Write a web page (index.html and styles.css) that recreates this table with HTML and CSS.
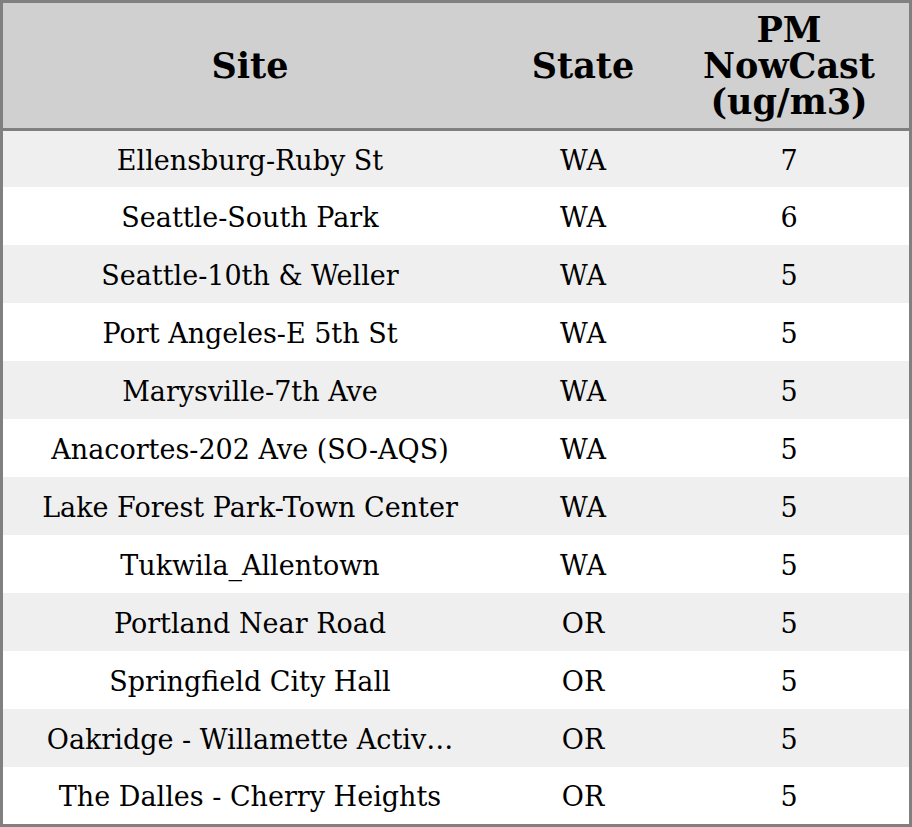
FILE: index.html
```html
<!DOCTYPE html>
<html>
<head>
<meta charset="utf-8">
<link rel="stylesheet" href="styles.css">
</head>
<body>
<table class="tbl">
  <thead>
    <tr>
      <th class="c-site">Site</th>
      <th class="c-state">State</th>
      <th class="c-pm">PM<br>NowCast<br>(ug/m3)</th>
    </tr>
  </thead>
  <tbody>
    <tr><td>Ellensburg-Ruby St</td><td>WA</td><td>7</td></tr>
    <tr><td>Seattle-South Park</td><td>WA</td><td>6</td></tr>
    <tr><td>Seattle-10th &amp; Weller</td><td>WA</td><td>5</td></tr>
    <tr><td>Port Angeles-E 5th St</td><td>WA</td><td>5</td></tr>
    <tr><td>Marysville-7th Ave</td><td>WA</td><td>5</td></tr>
    <tr><td>Anacortes-202 Ave (SO-AQS)</td><td>WA</td><td>5</td></tr>
    <tr><td>Lake Forest Park-Town Center</td><td>WA</td><td>5</td></tr>
    <tr><td>Tukwila_Allentown</td><td>WA</td><td>5</td></tr>
    <tr><td>Portland Near Road</td><td>OR</td><td>5</td></tr>
    <tr><td>Springfield City Hall</td><td>OR</td><td>5</td></tr>
    <tr><td>Oakridge - Willamette Activ…</td><td>OR</td><td>5</td></tr>
    <tr><td>The Dalles - Cherry Heights</td><td>OR</td><td>5</td></tr>
  </tbody>
</table>
</body>
</html>
```

FILE: styles.css
```css
html, body {
  margin: 0;
  padding: 0;
  background: #ffffff;
}
.tbl {
  width: 912px;
  border-collapse: separate;
  border-spacing: 0;
  border: 3px solid #808080;
  font-family: "DejaVu Serif", serif;
  color: #000;
  table-layout: fixed;
}
.tbl thead tr {
  height: 128px;
}
.tbl th {
  background: #d0d0d0;
  font-size: 35px;
  line-height: 36px;
  font-weight: bold;
  padding: 0;
  border-bottom: 3px solid #808080;
  text-align: center;
  vertical-align: middle;
}
.c-site { width: 494px; }
.c-state { width: 172px; }
.c-pm { width: 240px; }
.tbl tbody tr {
  height: 58px;
}
.tbl tbody tr:first-child {
  height: 56px;
}
.tbl tbody tr:last-child {
  height: 57px;
}
.tbl td {
  font-size: 27px;
  line-height: 32px;
  padding: 3px 0 0 0;
  text-align: center;
  vertical-align: middle;
  white-space: nowrap;
}
.tbl tbody tr:nth-child(odd) td {
  background: #efefef;
}
```
